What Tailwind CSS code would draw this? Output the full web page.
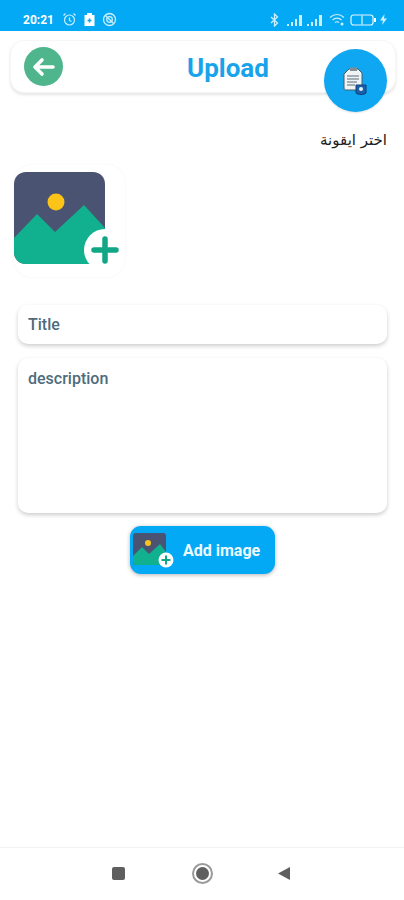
<!DOCTYPE html>
<html lang="en">
<head>
    <meta charset="UTF-8">
    <meta name="viewport" content="width=device-width, initial-scale=1.0">
    <title>Upload</title>
    <script src="https://cdn.jsdelivr.net/npm/@tailwindcss/browser@4"></script>
</head>
<body class="bg-white font-['Roboto',sans-serif]">
<div class="w-[404px] h-[900px] flex flex-col overflow-hidden relative">
    <!-- status bar -->
    <div class="h-[31px] bg-[#03a9f4] flex items-center justify-between pl-[23px] pr-[17px] pt-[8px] shrink-0 text-white">
        <div class="flex items-center">
            <span class="text-[12px] font-bold leading-none w-[33px]">20:21</span>
            <svg class="ml-[6px]" width="15" height="15" viewBox="0 0 15 15" fill="none" stroke="#cdeefd" stroke-width="1.2"><circle cx="7.5" cy="8" r="5"/><path d="M7.5 5.5V8.5L9.5 9.5M1.5 3.5L3.5 1.5M13.500 3.5L11.5 1.5"/></svg>
            <svg class="ml-[7px]" width="11" height="13" viewBox="0 0 11 13"><path fill="#fff" d="M3 0H8V2H10.5V13H.5V2H3Z"/><path stroke="#03a9f4" stroke-width="1.5" d="M3.5 7.5H7.5M5.5 5.5V9.5"/></svg>
            <svg class="ml-[7px]" width="15" height="15" viewBox="0 0 15 15" fill="none" stroke="#cdeefd" stroke-width="1.3"><circle cx="7.5" cy="7.5" r="6"/><circle cx="7.5" cy="7.5" r="2.8"/><path d="M3.5 3.5L11.5 11.5"/></svg>
        </div>
        <div class="flex items-center">
            <svg width="9" height="14" viewBox="0 0 9 14" fill="none" stroke="#cdeefd" stroke-width="1.3"><path d="M1 4L7.5 10L4.5 13V1L7.5 4L1 10"/></svg>
            <svg class="ml-[7px]" width="17" height="12" viewBox="0 0 17 12" fill="#cdeefd"><path d="M1 10h2v2H1zM5 8h2v4H5zM9 5h2v7H9zM13 1h3v11h-3z"/></svg>
            <svg class="ml-[3px]" width="17" height="12" viewBox="0 0 17 12" fill="#cdeefd"><path d="M1 10h2v2H1zM5 8h2v4H5zM9 5h2v7H9zM13 1h3v11h-3z"/></svg>
            <svg class="ml-[6px]" width="16" height="13" viewBox="0 0 16 13" fill="none" stroke="#cdeefd" stroke-width="1.1"><path d="M1 4.5C5 .5 11 .5 15 4.5M3.5 7C6 4.500 10 4.500 12.5 7M6 9.5C7 8.500 9 8.500 10 9.5"/><circle cx="13" cy="11" r="1" fill="#cdeefd"/></svg>
            <svg class="ml-[5px]" width="27" height="12" viewBox="0 0 27 12" fill="none" stroke="#e6f7ff" stroke-width="1.2"><rect x="1" y="1" width="22" height="10" rx="2.5"/><path d="M12 1.5V10.5"/><path fill="#fff" stroke="none" d="M24 4h2v4h-2z"/></svg>
            <svg class="ml-[3px]" width="7" height="11" viewBox="0 0 7 11" fill="#cdeefd"><path d="M4.5 0L0 6.5H3L2 11L7 4.5H4Z"/></svg>
        </div>
    </div>

    <div class="flex-1 flex flex-col relative">
        <!-- header -->
        <div class="mt-[9px] ml-[10px] w-[386px] h-[53px] bg-white rounded-[14px] border border-[#f6f6f6] shadow-[0_2px_3px_rgba(0,0,0,0.1)] flex items-center relative shrink-0">
            <div class="ml-[13px] w-[39px] h-[39px] rounded-full bg-[#4fb58c] flex items-center justify-center">
                <svg width="24" height="20" viewBox="0 0 24 20" fill="none" stroke="#fff" stroke-width="3.6" stroke-linecap="round" stroke-linejoin="round"><path d="M21 10H4M10 3L3 10L10 17"/></svg>
            </div>
            <span class="absolute left-[176px] top-[14px] text-[26px] font-bold text-[#18a3ea] leading-none">Upload</span>
        </div>
        <!-- fab -->
        <div class="absolute left-[324px] top-[18px] w-[63px] h-[63px] rounded-full bg-[#0fa7f2] shadow-[0_1px_2px_rgba(0,0,0,0.12)] flex items-center justify-center">
            <svg class="-ml-[2px]" width="26" height="30" viewBox="0 0 26 30">
                <path fill="#eef3f5" stroke="#4a5a66" stroke-width="1" d="M7 3H16L20 7V24H4C3 24 2 23 2 22V8Z"/>
                <path fill="#7f8d96" d="M8 1.500H15V5H8Z"/>
                <path stroke="#8b98a0" stroke-width="1.4" d="M5 10H17M5 13H17M5 16H15M5 19H13"/>
                <path fill="#1b5fa8" stroke="#123f78" d="M14 19H24V27C22 29 16 29 14 27Z"/>
                <circle cx="19" cy="23" r="2" fill="#dff2fb"/>
            </svg>
        </div>

        <!-- arabic label -->
        <p dir="rtl" class="mt-[37px] pr-[17px] text-[15px] leading-[20px] text-[#1c1c1c] font-['DejaVu_Sans',sans-serif] shrink-0">اختر ايقونة</p>

        <!-- picker -->
        <div class="mt-[15px] ml-[14px] w-[111px] h-[112px] bg-white rounded-[18px] shadow-[0_0_3px_rgba(0,0,0,0.05)] shrink-0 pt-[7px]">
            <svg class="block" width="111" height="105" viewBox="0 0 111 105">
                <path fill="#4a5371" d="M12 0H79C86 0 91 5 91 12V92H12C5 92 0 87 0 80V12C0 5 5 0 12 0Z"/>
                <path fill="#11b08f" d="M0 66L23 42L41 60L70 33L91 56V92H12C5 92 0 87 0 80Z"/>
                <circle cx="42" cy="30" r="8.5" fill="#fcc419"/>
                <circle cx="91" cy="78" r="21" fill="#fff"/>
                <path stroke="#11a686" stroke-width="5.5" stroke-linecap="round" d="M91 67V89M80 78H102"/>
            </svg>
        </div>

        <!-- form -->
        <div class="mt-[28px] ml-[18px] w-[369px] h-[39px] bg-white rounded-[10px] shadow-[0_2px_4px_rgba(0,0,0,0.2)] flex items-center pl-[10px] pt-[1px] text-[16px] font-medium text-[#4e6b7c] shrink-0">Title</div>
        <div class="mt-[14px] ml-[18px] w-[369px] h-[155px] bg-white rounded-[10px] shadow-[0_2px_4px_rgba(0,0,0,0.2)] pl-[10px] pt-[11px] text-[16px] leading-[20px] font-medium text-[#4e6b7c] shrink-0">description</div>

        <!-- add image -->
        <div class="mt-[13px] ml-[130px] w-[145px] h-[48px] bg-[#03a9f4] rounded-[11px] shadow-[0_1px_4px_rgba(0,0,0,0.3)] flex items-center pl-[3px] shrink-0">
            <svg width="43" height="36" viewBox="0 0 43 36" class="shrink-0">
                <path fill="#4a5371" d="M3 1H30C32 1 33 2 33 4V33H3C1 33 0 32 0 30V4C0 2 1 1 3 1Z"/>
                <path fill="#11b08f" d="M0 24L9 15L16 22L27 12L33 20V33H3C1 33 0 32 0 30Z"/>
                <circle cx="15" cy="11" r="3" fill="#fcc419"/>
                <circle cx="33" cy="28" r="7.5" fill="#fff"/>
                <path stroke="#11a686" stroke-width="2" d="M33 23.5V32.5M28.5 28H37.5"/>
            </svg>
            <span class="ml-[7px] pt-[2px] text-[16px] font-bold text-[#eef9ff] leading-none">Add image</span>
        </div>
    </div>

    <!-- nav bar -->
    <div class="h-[53px] shrink-0 border-t border-[#f2f2f2] flex items-center pb-[2px] relative">
        <div class="ml-[112px] w-[13px] h-[13px] rounded-[2px] bg-[#5f5f5f]"></div>
        <div class="ml-[67px] w-[21px] h-[21px] rounded-full border-2 border-[#9a9a9a] flex items-center justify-center">
            <div class="w-[13px] h-[13px] rounded-full bg-[#5f5f5f]"></div>
        </div>
        <svg class="ml-[65px]" width="13" height="15" viewBox="0 0 13 15"><path fill="#5f5f5f" d="M0 7.5L12 1V14Z"/></svg>
    </div>
</div>
</body>
</html>
